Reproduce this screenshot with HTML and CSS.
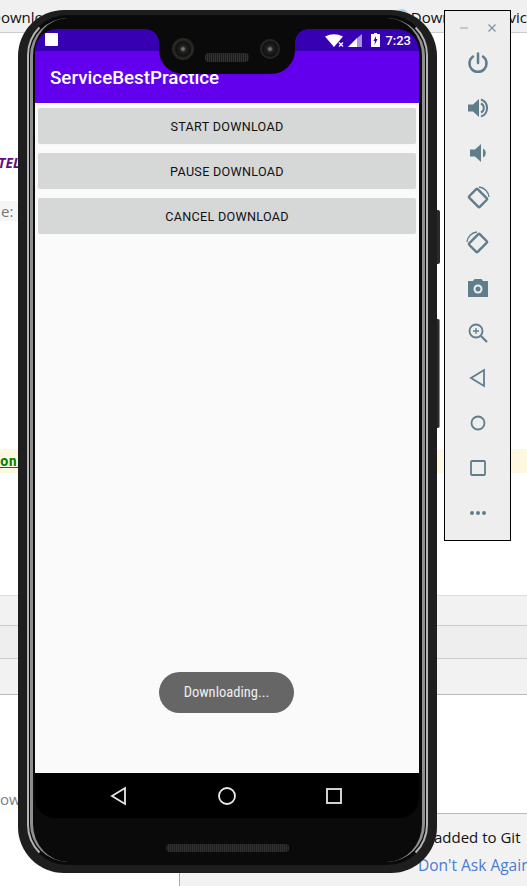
FILE: index.html
```html
<!DOCTYPE html>
<html lang="en">
<head>
<meta charset="UTF-8" />
<meta name="viewport" content="width=device-width, initial-scale=1" />
<title>ServiceBestPractice</title>
<link rel="stylesheet" href="styles.css">
</head>
<body>

<!-- page behind the emulator -->
<div class="desk">
  <div class="tabs">
    <span class="tab-left">Downlo</span>
    <span class="tab-icon"></span>
    <span class="tab-right">Download Servic</span>
  </div>
  <div class="line line-tel"><span class="tel">TEL</span></div>
  <div class="line line-e"><span class="e-chip">e:</span></div>
  <div class="line line-on"><span class="on">on/</span></div>
  <div class="rows">
    <div class="row row-a"></div>
    <div class="row row-b"></div>
    <div class="row row-c"></div>
  </div>
  <div class="line line-ow"><span class="ow">ow</span></div>
</div>

<div class="notice">
  <div class="notice-title">added to Git</div>
  <div class="notice-link">Don't Ask Again</div>
</div>

<!-- phone -->
<div class="phone">
  <div class="side-key side-key-top"></div>
  <div class="side-key side-key-low"></div>
  <div class="rim">
    <div class="ring-light">
      <div class="ring-gray">
        <div class="screen">
          <div class="status">
            <span class="status-square"></span>
            <div class="status-right">
              <svg width="21" height="13" viewBox="0 0 21 13">
                <path fill="#fff" d="M0 2.500 Q9-2 18 2.500L9 13Z"/>
                <path stroke="#fff" stroke-width="1.200" d="M14 8.500l4 4M18 8.500l-4 4"/>
              </svg>
              <svg width="14" height="13" viewBox="0 0 14 13">
                <path fill="#fff" d="M0 13 L9 4V13Z"/>
                <path fill="#a593e0" d="M9 4 L14 0V13H9Z"/>
              </svg>
              <svg class="battery" width="9" height="14" viewBox="0 0 9 14">
                <path fill="#fff" d="M3 0H6V1H9V14H0V1H3Z"/>
                <path fill="#3700b3" d="M5 3 L2.500 8H4L3.500 12 6.500 6H5Z"/>
              </svg>
              <span class="clock">7:23</span>
            </div>
          </div>
          <div class="appbar">ServiceBestPractice</div>
          <div class="content">
            <button class="btn">START DOWNLOAD</button>
            <button class="btn">PAUSE DOWNLOAD</button>
            <button class="btn">CANCEL DOWNLOAD</button>
            <div class="toast">Downloading...</div>
          </div>
          <div class="navbar">
            <svg width="18" height="20" viewBox="0 0 18 20"><path fill="none" stroke="#e8e8e8" stroke-width="1.800" d="M15 2V18L2 10Z"/></svg>
            <svg width="18" height="18" viewBox="0 0 18 18"><circle cx="9" cy="9" r="8" fill="none" stroke="#e8e8e8" stroke-width="1.800"/></svg>
            <svg width="16" height="16" viewBox="0 0 16 16"><rect x="1" y="1" width="14" height="14" fill="none" stroke="#e8e8e8" stroke-width="1.800"/></svg>
          </div>
        </div>
        <div class="chin"><span class="speaker speaker-wide"></span></div>
      </div>
    </div>
  </div>
  <div class="notch">
    <span class="cam cam-left"></span>
    <span class="speaker"></span>
    <span class="cam cam-right"></span>
  </div>
</div>

<!-- emulator toolbar -->
<div class="toolbar">
  <div class="win-btns">
    <svg width="10" height="10" viewBox="0 0 10 10"><path stroke="#a9b6bc" stroke-width="1.300" d="M1 5H9"/></svg>
    <svg width="10" height="10" viewBox="0 0 10 10"><path stroke="#7c929c" stroke-width="1.200" d="M1.500 1.500l7 7M8.500 1.500l-7 7"/></svg>
  </div>
  <svg class="tool" viewBox="0 0 24 24"><path fill="none" stroke="#607d8b" stroke-width="2.500" stroke-linecap="round" d="M12 2.500V12M7 5.500A8.500 8.500 0 1 0 17 5.500"/></svg>
  <svg class="tool" viewBox="0 0 24 24"><path fill="#607d8b" d="M2 8.500H7L13 3V21L7 15.500H2Z"/><path fill="none" stroke="#607d8b" stroke-width="2" d="M15 7.500A5 5 0 0 1 15 16.500M15 3.500A9 9 0 0 1 15 20.500"/></svg>
  <svg class="tool" viewBox="0 0 24 24"><path fill="#607d8b" d="M4 8.500H9L15 3V21L9 15.500H4Z"/><path fill="#607d8b" d="M17 7.500A5 5 0 0 1 17 16.500Z"/></svg>
  <svg class="tool" viewBox="0 0 24 24"><rect x="4.500" y="6" width="15" height="12" rx="1" transform="rotate(45 12 12)" fill="none" stroke="#607d8b" stroke-width="2.400"/><path fill="none" stroke="#607d8b" stroke-width="1.300" d="M13 1A11 11 0 0 1 23 11"/></svg>
  <svg class="tool" viewBox="0 0 24 24"><rect x="4.500" y="6" width="15" height="12" rx="1" transform="rotate(-45 12 12)" fill="none" stroke="#607d8b" stroke-width="2.400"/><path fill="none" stroke="#607d8b" stroke-width="1.300" d="M11 1A11 11 0 0 0 1 11"/></svg>
  <svg class="tool" viewBox="0 0 24 24"><path fill="#607d8b" d="M8.500 3H15.500L17 5H21.500A.5.500 0 0 1 22 5.500V20.500A.5.500 0 0 1 21.500 21H2.500A.5.500 0 0 1 2 20.500V5.500A.5.500 0 0 1 2.500 5H7Z"/><circle cx="12" cy="13" r="4.500" fill="#eee"/><circle cx="12" cy="13" r="2.500" fill="#607d8b"/></svg>
  <svg class="tool" viewBox="0 0 24 24"><circle cx="10" cy="10" r="6.500" fill="none" stroke="#607d8b" stroke-width="1.800"/><path stroke="#607d8b" stroke-width="2.200" d="M15 15L21 21"/><path stroke="#607d8b" stroke-width="1.300" d="M10 7V13M7 10H13"/></svg>
  <svg class="tool" viewBox="0 0 24 24"><path fill="none" stroke="#607d8b" stroke-width="1.800" d="M18 4V20L5 12Z"/></svg>
  <svg class="tool" viewBox="0 0 24 24"><circle cx="12" cy="12" r="6.500" fill="none" stroke="#607d8b" stroke-width="1.800"/></svg>
  <svg class="tool" viewBox="0 0 24 24"><rect x="5" y="5" width="14" height="14" rx="1" fill="none" stroke="#607d8b" stroke-width="1.800"/></svg>
  <svg class="tool tool-last" viewBox="0 0 24 24"><circle cx="6" cy="12" r="2" fill="#607d8b"/><circle cx="12" cy="12" r="2" fill="#607d8b"/><circle cx="18" cy="12" r="2" fill="#607d8b"/></svg>
</div>

</body>
</html>
```
FILE: styles.css
```css
html, body {
  margin: 0;
  padding: 0;
}
body {
  position: relative;
  width: 527px;
  height: 886px;
  overflow: hidden;
  background: #fff;
  font-family: "Open Sans", "Liberation Sans", sans-serif;
}

/* page behind */
.desk {
  display: flex;
  flex-direction: column;
  height: 886px;
}
.tabs {
  display: flex;
  height: 33px;
  background: #f0f0f0;
  border-bottom: 1px solid #ccc;
  box-sizing: border-box;
  font-size: 15px;
  line-height: 16px;
  padding-top: 9px;
  color: #111;
  white-space: nowrap;
}
.tab-left {
  margin-left: -10px;
}
.tab-icon {
  width: 16px;
  height: 16px;
  border-radius: 50%;
  background: #a9d3ea;
  margin-left: 350px;
}
.tab-right {
  margin-left: 2px;
}
.line {
  display: flex;
  align-items: center;
}
.line-tel {
  margin-top: 120px;
  height: 18px;
}
.tel {
  font-size: 14px;
  font-weight: bold;
  font-style: italic;
  color: #660e7a;
  margin-left: -2px;
}
.line-e {
  margin-top: 31px;
  height: 18px;
}
.e-chip {
  background: #f5f5f5;
  color: #777;
  font-size: 15px;
  padding: 0 8px 0 1px;
}
.line-on {
  margin-top: 229px;
  height: 24px;
  background: #fff8e1;
}
.on {
  color: #008000;
  font-family: "DejaVu Sans Mono", monospace;
  font-size: 14px;
  font-weight: bold;
  text-decoration: underline;
}
.rows {
  margin-top: 122px;
}
.row {
  background: #f2f2f2;
  border-top: 1px solid #ddd;
  box-sizing: border-box;
}
.row-a {
  height: 30px;
}
.row-b {
  height: 33px;
  background: #eee;
  border-top-color: #ccc;
}
.row-c {
  height: 37px;
  background: #f2f2f2;
  border-top-color: #ccc;
  border-bottom: 1px solid #bbb;
}
.line-ow {
  margin-top: 95px;
  height: 18px;
}
.ow {
  color: #7a7f8a;
  font-size: 15px;
}

.notice {
  position: absolute;
  left: 179px;
  top: 813px;
  right: 0;
  bottom: 0;
  background: #f2f2f2;
  border-left: 1px solid #aaa;
  border-top: 1px solid #bbb;
  box-sizing: border-box;
  padding: 13px 0 0 254px;
  font-size: 15px;
  white-space: nowrap;
}
.notice-title {
  color: #111;
  margin-bottom: 7px;
}
.notice-link {
  color: #4a7cd4;
  font-size: 15.500px;
  margin-left: -16px;
}

/* phone */
.phone {
  position: absolute;
  left: 18px;
  top: 10px;
  width: 419px;
  height: 863px;
}
.rim {
  height: 100%;
  box-sizing: border-box;
  background: #1e1e1e;
  border-radius: 46px;
  padding: 5px 9px 8px;
}
.ring-light {
  height: 100%;
  box-sizing: border-box;
  border: 2px solid #0a0a0a;
  border-left-color: #b5b5b5;
  border-right-color: #b5b5b5;
  border-radius: 40px;
  background: #0a0a0a;
  padding: 1px;
}
.ring-gray {
  height: 100%;
  box-sizing: border-box;
  border-left: 3px solid #8f8f8f;
  border-right: 3px solid #8f8f8f;
  border-radius: 38px;
  background: #0a0a0a;
  padding: 11px 3px 0 2px;
  display: flex;
  flex-direction: column;
}
.side-key {
  position: absolute;
  left: 419px;
  width: 3px;
  background: #2a2a2a;
  border-radius: 0 2px 2px 0;
}
.side-key-top {
  top: 200px;
  height: 54px;
}
.side-key-low {
  top: 309px;
  height: 109px;
  box-sizing: border-box;
  border-right: 1px solid #888;
}
.screen {
  height: 789px;
  flex-shrink: 0;
  border-radius: 22px 22px 20px 20px;
  overflow: hidden;
  display: flex;
  flex-direction: column;
}
.status {
  display: flex;
  justify-content: space-between;
  align-items: center;
  height: 22px;
  background: #3700b3;
  padding: 0 8px 0 10px;
  flex-shrink: 0;
}
.status-square {
  width: 13px;
  height: 13px;
  background: #fff;
  border-radius: 1px;
  margin-top: -2px;
}
.status-right {
  display: flex;
  align-items: center;
  gap: 5px;
}
.status-right svg + svg {
  margin-left: -3px;
}
.status-right .battery {
  margin-left: 4px;
}
.clock {
  color: #fff;
  font-family: Roboto, sans-serif;
  font-size: 13px;
  font-weight: 500;
}
.appbar {
  height: 52px;
  box-sizing: border-box;
  background: #6200ee;
  color: #fff;
  font-family: Roboto, sans-serif;
  font-size: 18.800px;
  font-weight: 500;
  line-height: 54px;
  padding-left: 15px;
  flex-shrink: 0;
}
.content {
  position: relative;
  flex: 1;
  background: #fafafa;
  display: flex;
  flex-direction: column;
  gap: 10px;
  padding: 5px 3px 0;
}
.btn {
  height: 35px;
  border: none;
  border-radius: 2px;
  background: #d6d7d7;
  box-shadow: 0 1px 1px rgba(0,0,0,.15);
  font-family: Roboto, sans-serif;
  font-size: 12.600px;
  font-weight: 400;
  letter-spacing: .3px;
  color: #111;
  padding: 1px 0 0;
}
.toast {
  position: absolute;
  left: 124px;
  bottom: 60px;
  width: 135px;
  height: 41px;
  border-radius: 21px;
  background: #666;
  color: #eee;
  font-family: Roboto, sans-serif;
  font-size: 14.500px;
  font-stretch: condensed;
  line-height: 41px;
  text-align: center;
}
.navbar {
  height: 45px;
  background: #000;
  display: flex;
  justify-content: center;
  align-items: center;
  gap: 90px;
  padding-right: 2px;
  flex-shrink: 0;
}
.notch {
  position: absolute;
  left: 141px;
  top: 19px;
  width: 136px;
  height: 45px;
  background: #0a0a0a;
  border-radius: 0 0 24px 24px;
}
.notch::before,
.notch::after {
  content: "";
  position: absolute;
  top: 0;
  width: 13px;
  height: 13px;
}
.notch::before {
  left: -13px;
  background: radial-gradient(circle at 0 100%, transparent 12.500px, #0a0a0a 13px);
}
.notch::after {
  right: -13px;
  background: radial-gradient(circle at 100% 100%, transparent 12.500px, #0a0a0a 13px);
}
.cam {
  position: absolute;
  border-radius: 50%;
  background: radial-gradient(circle, #777 0 1px, #222 3px, #111 7px, #2a2723 9px);
}
.cam-left {
  left: 13px;
  top: 9px;
  width: 22px;
  height: 22px;
}
.cam-right {
  left: 101px;
  top: 10px;
  width: 20px;
  height: 20px;
}
.speaker {
  position: absolute;
  left: 46px;
  top: 24px;
  width: 44px;
  height: 9px;
  border-radius: 4px;
  background: repeating-linear-gradient(90deg, #333 0 1px, #1c1c1c 1px 2px);
}
.chin {
  flex: 1;
  position: relative;
}
.speaker-wide {
  left: 131px;
  top: 26px;
  width: 123px;
  height: 8px;
}

/* emulator toolbar */
.toolbar {
  position: absolute;
  left: 444px;
  top: 10px;
  width: 67px;
  height: 531px;
  box-sizing: border-box;
  background: #eee;
  border: 1px solid #000;
  display: flex;
  flex-direction: column;
  align-items: center;
  padding-top: 12px;
}
.win-btns {
  display: flex;
  gap: 18px;
  height: 14px;
  margin-bottom: 14px;
  flex-shrink: 0;
}
.tool {
  width: 24px;
  height: 24px;
  margin-bottom: 21px;
  flex-shrink: 0;
}
.tool-last {
  margin-bottom: 0;
}
```
